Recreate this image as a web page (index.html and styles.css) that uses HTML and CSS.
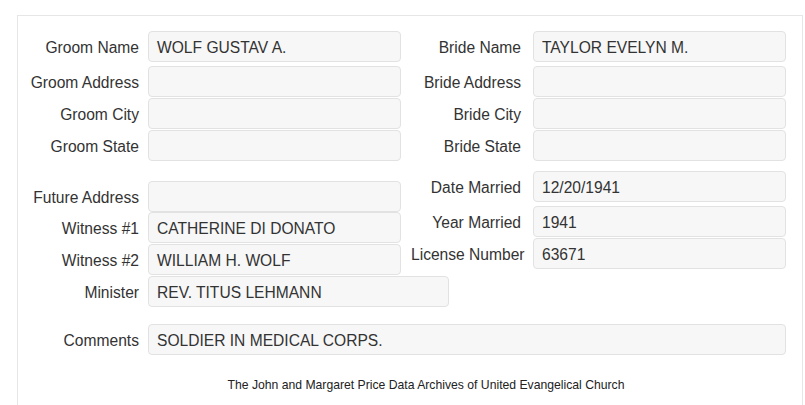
FILE: index.html
```html
<!DOCTYPE html>
<html>
	<head>
		<meta charset="UTF-8" />
		<meta name="viewport" content="width=device-width" />
		<title>Marriage Record</title>
		<link rel="stylesheet" href="styles.css">
	</head>
	<body>
		<div class="panel">
			<div class="section top">
				<div class="col col-left">
					<div class="row"><label>Groom Name</label><div class="field">WOLF GUSTAV A.</div></div>
					<div class="row"><label>Groom Address</label><div class="field"></div></div>
					<div class="row"><label>Groom City</label><div class="field"></div></div>
					<div class="row"><label>Groom State</label><div class="field"></div></div>
				</div>
				<div class="col col-right">
					<div class="row"><label>Bride Name</label><div class="field">TAYLOR EVELYN M.</div></div>
					<div class="row"><label>Bride Address</label><div class="field"></div></div>
					<div class="row"><label>Bride City</label><div class="field"></div></div>
					<div class="row"><label>Bride State</label><div class="field"></div></div>
				</div>
			</div>

			<div class="section lower">
				<div class="col col-left">
					<div class="row"><label>Future Address</label><div class="field"></div></div>
					<div class="row"><label>Witness #1</label><div class="field">CATHERINE DI DONATO</div></div>
					<div class="row"><label>Witness #2</label><div class="field">WILLIAM H. WOLF</div></div>
				</div>
				<div class="col col-right">
					<div class="row"><label>Date Married</label><div class="field">12/20/1941</div></div>
					<div class="row"><label>Year Married</label><div class="field">1941</div></div>
					<div class="row"><label>License Number</label><div class="field">63671</div></div>
				</div>
			</div>

			<div class="row minister"><label>Minister</label><div class="field">REV. TITUS LEHMANN</div></div>

			<div class="row comments"><label>Comments</label><div class="field">SOLDIER IN MEDICAL CORPS.</div></div>

			<div class="footer">The John and Margaret Price Data Archives of United Evangelical Church</div>
		</div>
	</body>
</html>
```

FILE: styles.css
```css
body {
    margin: 0;
    overflow: hidden;
    background-color: #fff;
    font-family: "Liberation Sans", Arial, sans-serif;
    font-size: 15.6px;
    color: #333;
}

.panel {
    margin: 15px 0 0 17px;
    width: 786px;
    height: 390px;
    padding: 15px 0 0 0;
    box-sizing: border-box;
    border: 1px solid #e6e6e6;
    border-bottom: none;
}

.section {
    display: flex;
    align-items: flex-start;
    gap: 10px;
}

.row {
    display: flex;
    align-items: center;
    gap: 9px;
}

.row + .row {
    margin-top: 1px;
}

label {
    flex-shrink: 0;
    width: 121px;
    padding-top: 3px;
    text-align: right;
    white-space: nowrap;
}

.col-right .row {
    gap: 12px;
}

.col-right label {
    width: 110px;
}

.field {
    width: 253px;
    height: 31px;
    box-sizing: border-box;
    padding: 1px 8px 0;
    line-height: 29px;
    background-color: #f7f7f7;
    border: 1px solid #e2e2e2;
    border-radius: 4px;
    white-space: nowrap;
}

.top .row:first-child,
.lower .col-right .row:first-child {
    margin-bottom: 4px;
}

.lower .col-left {
    padding-top: 20px;
}

.lower .col-left .row:nth-child(2) {
    margin-top: 0;
}

.lower .col-right {
    padding-top: 10px;
}

.minister {
    margin-top: 1px;
}

.minister .field {
    width: 301px;
}

.row.comments {
    margin-top: 17px;
}

.comments .field {
    width: 638px;
}

.footer {
    margin: 22px 0 0 32px;
    font-size: 12.2px;
    line-height: 16px;
    text-align: center;
    color: #222;
}
```
